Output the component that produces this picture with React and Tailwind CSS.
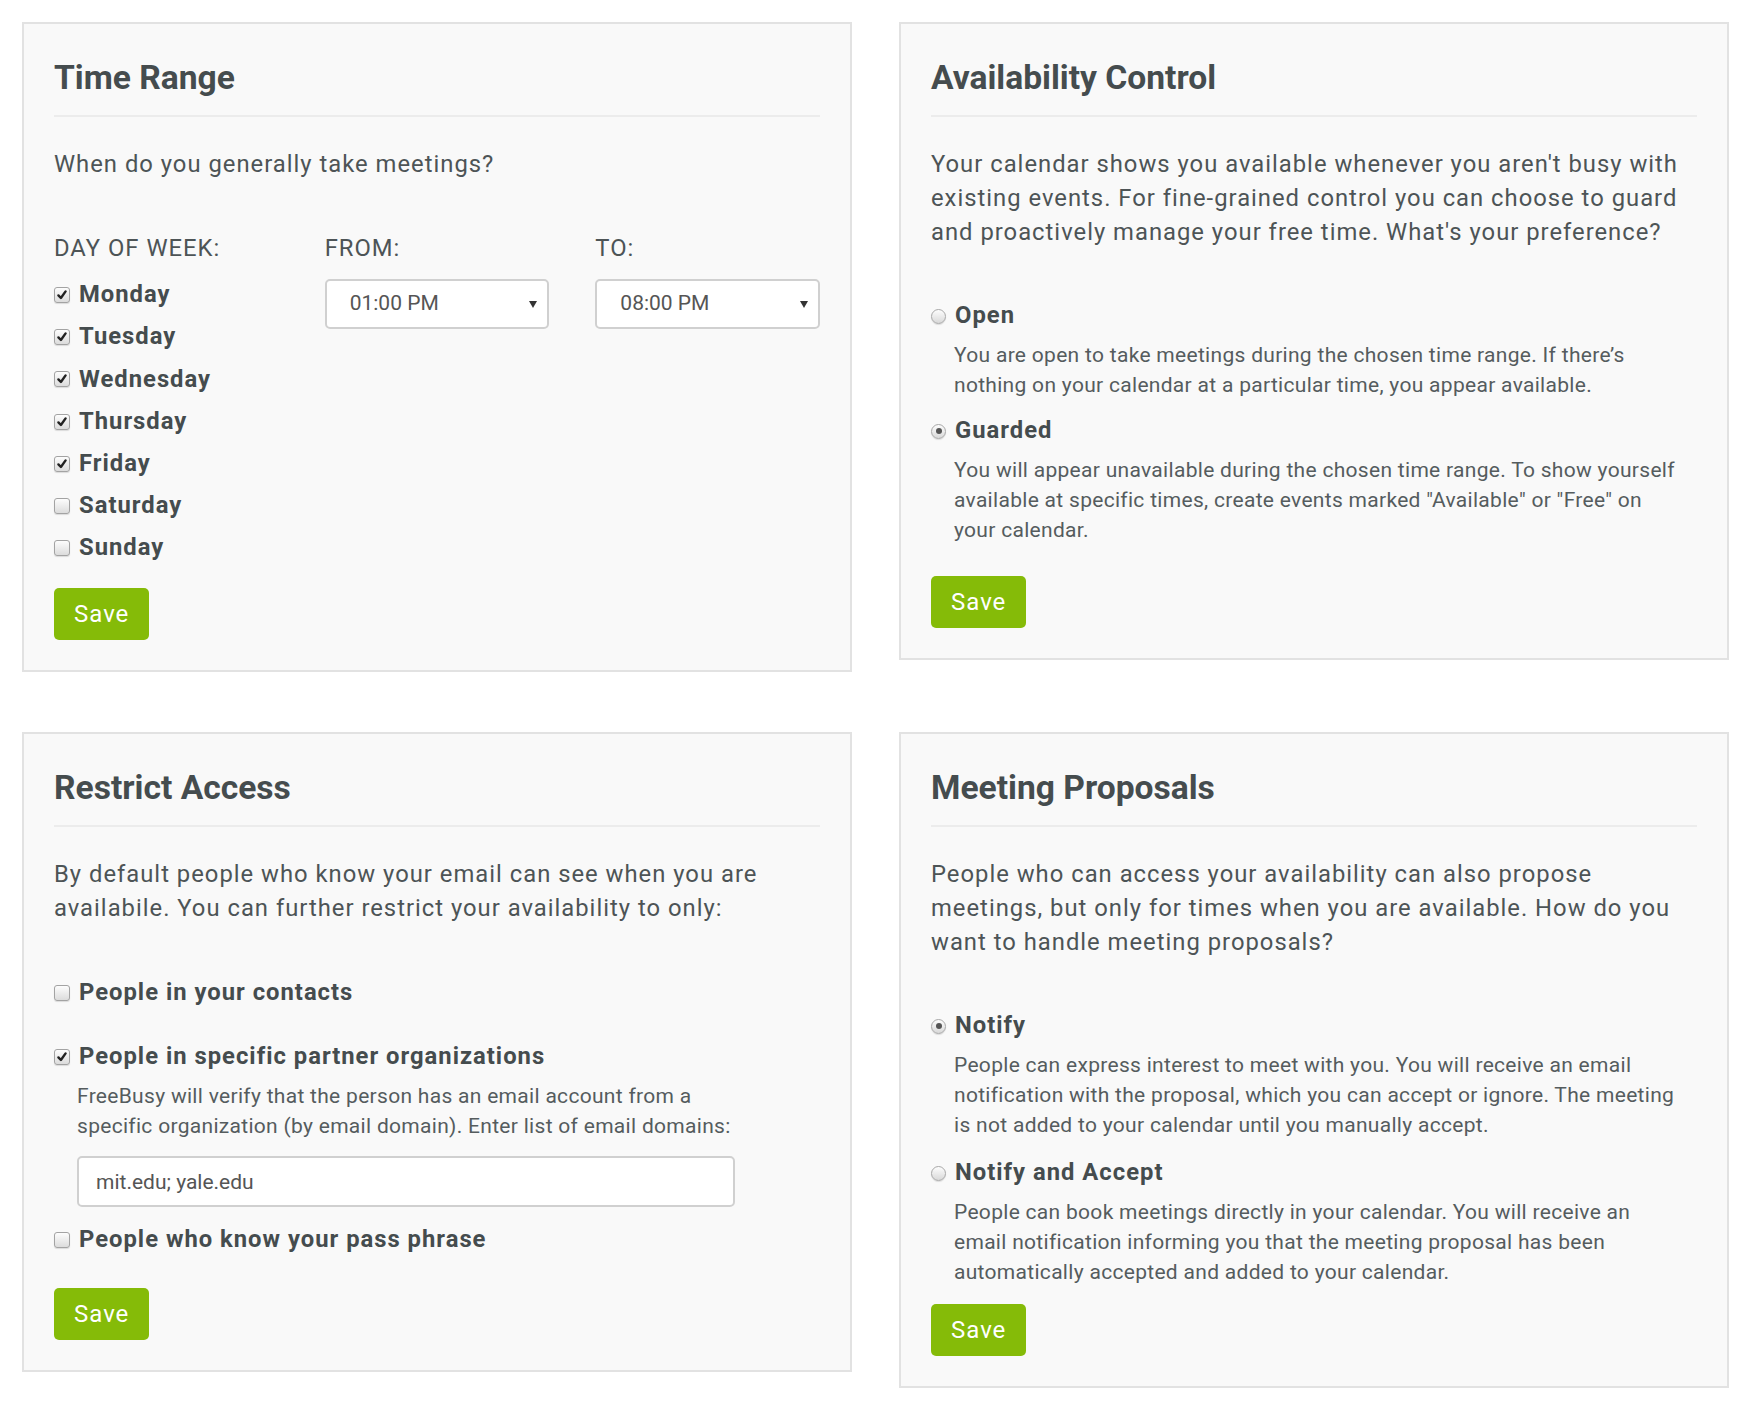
import React from 'react';

const days = [
  { name: 'Monday', checked: true },
  { name: 'Tuesday', checked: true },
  { name: 'Wednesday', checked: true },
  { name: 'Thursday', checked: true },
  { name: 'Friday', checked: true },
  { name: 'Saturday', checked: false },
  { name: 'Sunday', checked: false },
];

const Checkbox = ({ checked }) => (
  <span className="inline-flex h-[16px] w-[16px] shrink-0 items-center justify-center rounded-[3px] border border-[#a3a3a3] bg-linear-to-b from-[#fdfdfd] to-[#dcdcdc] shadow-[0_1px_1px_rgba(0,0,0,0.12)]">
    {checked && (
      <svg viewBox="0 0 12 12" className="h-[12px] w-[12px]">
        <path d="M2.4 6.4 L4.9 9 L9.6 2.4" fill="none" stroke="#222" strokeWidth="2.4" strokeLinecap="round" strokeLinejoin="round" />
      </svg>
    )}
  </span>
);

const Radio = ({ checked }) => (
  <span className="inline-flex h-[15px] w-[15px] shrink-0 items-center justify-center rounded-full border border-[#a8a8a8] bg-linear-to-b from-[#fdfdfd] to-[#d9d9d9] shadow-[0_1px_1px_rgba(0,0,0,0.12)]">
    {checked && <span className="h-[6px] w-[6px] rounded-full bg-[#555]" />}
  </span>
);

const SaveButton = ({ className = '' }) => (
  <button className={`h-[52px] rounded-[5px] bg-[#85bb08] px-[20px] text-[24px] tracking-[1px] text-white ${className}`}>
    Save
  </button>
);

const Card = ({ title, children }) => (
  <div className="border-2 border-[#e2e2e2] bg-[#f9f9f9] px-[30px] pt-[35px] pb-[30px]">
    <h3 className="text-[33.6px] font-bold leading-[37px] text-[#454c4e]">{title}</h3>
    <div className="mt-[19px] border-t-2 border-[#ececec]" />
    {children}
  </div>
);

const Select = ({ value }) => (
  <div className="flex h-[50px] w-full items-center justify-between rounded-[5px] border-2 border-[#d0d0d0] bg-white pl-[23px] pr-[10px] text-[21px] text-[#555]">
    <span>{value}</span>
    <svg viewBox="0 0 8 7" className="h-[7px] w-[8px]">
      <path d="M0 0 H8 L4 7 Z" fill="#333" />
    </svg>
  </div>
);

const OptionLabel = ({ control, children, className = '' }) => (
  <label className={`flex h-[34px] items-center gap-[9px] text-[23.8px] font-bold tracking-[1px] text-[#454c4e] ${className}`}>
    {control}
    <span>{children}</span>
  </label>
);

const Desc = ({ children, className = '' }) => (
  <p className={`mt-[7px] pl-[23px] text-[21px] leading-[30px] tracking-[0.3px] text-[#555c5e] ${className}`}>{children}</p>
);

const Lead = ({ children, className = '' }) => (
  <p className={`text-[23.8px] leading-[34px] tracking-[1px] text-[#4d5456] ${className}`}>{children}</p>
);

const TimeRange = () => (
  <Card title="Time Range">
    <Lead className="mt-[30px]">When do you generally take meetings?</Lead>
    <div className="mt-[50px] grid grid-cols-3 gap-x-[46px]">
      <div>
        <Lead className="uppercase">Day of week:</Lead>
        <div className="mt-[9px]">
          {days.map((d) => (
            <label key={d.name} className="flex h-[42.2px] items-center gap-[9px] text-[23.8px] font-bold tracking-[1px] text-[#454c4e]">
              <Checkbox checked={d.checked} />
              <span>{d.name}</span>
            </label>
          ))}
        </div>
      </div>
      <div>
        <Lead className="uppercase">From:</Lead>
        <div className="mt-[14px]">
          <Select value="01:00 PM" />
        </div>
      </div>
      <div>
        <Lead className="uppercase">To:</Lead>
        <div className="mt-[14px]">
          <Select value="08:00 PM" />
        </div>
      </div>
    </div>
    <SaveButton className="mt-[19px]" />
  </Card>
);

const AvailabilityControl = () => (
  <Card title="Availability Control">
    <Lead className="mt-[30px]">
      Your calendar shows you available whenever you aren't busy with existing events. For fine-grained control you can choose to guard and proactively manage your free time. What's your preference?
    </Lead>
    <div className="mt-[50px] pr-[16px]">
      <OptionLabel control={<Radio checked={false} />}>Open</OptionLabel>
      <Desc>
        You are open to take meetings during the chosen time range. If there’s nothing on your calendar at a particular time, you appear available.
      </Desc>
      <OptionLabel className="mt-[14px]" control={<Radio checked />}>Guarded</OptionLabel>
      <Desc>
        You will appear unavailable during the chosen time range. To show yourself available at specific times, create events marked "Available" or "Free" on your calendar.
      </Desc>
    </div>
    <SaveButton className="mt-[31px]" />
  </Card>
);

const RestrictAccess = () => (
  <Card title="Restrict Access">
    <Lead className="mt-[30px]">
      By default people who know your email can see when you are availabile. You can further restrict your availability to only:
    </Lead>
    <div className="mt-[51px]">
      <OptionLabel control={<Checkbox checked={false} />}>People in your contacts</OptionLabel>
      <OptionLabel className="mt-[30px]" control={<Checkbox checked />}>People in specific partner organizations</OptionLabel>
      <div className="w-[681px]">
        <Desc>
          FreeBusy will verify that the person has an email account from a specific organization (by email domain). Enter list of email domains:
        </Desc>
        <div className="mt-[15px] pl-[23px]">
          <input
            type="text"
            defaultValue="mit.edu; yale.edu"
            className="h-[51px] w-full rounded-[5px] border-2 border-[#d0d0d0] bg-white pl-[17px] text-[21px] text-[#555] outline-none"
          />
        </div>
      </div>
      <OptionLabel className="mt-[16px]" control={<Checkbox checked={false} />}>People who know your pass phrase</OptionLabel>
    </div>
    <SaveButton className="mt-[31px]" />
  </Card>
);

const MeetingProposals = () => (
  <Card title="Meeting Proposals">
    <Lead className="mt-[30px]">
      People who can access your availability can also propose meetings, but only for times when you are available. How do you want to handle meeting proposals?
    </Lead>
    <div className="mt-[50px] pr-[16px]">
      <OptionLabel control={<Radio checked />}>Notify</OptionLabel>
      <Desc>
        People can express interest to meet with you. You will receive an email notification with the proposal, which you can accept or ignore. The meeting is not added to your calendar until you manually accept.
      </Desc>
      <OptionLabel className="mt-[16px]" control={<Radio checked={false} />}>Notify and Accept</OptionLabel>
      <Desc>
        People can book meetings directly in your calendar. You will receive an email notification informing you that the meeting proposal has been automatically accepted and added to your calendar.
      </Desc>
    </div>
    <SaveButton className="mt-[17px]" />
  </Card>
);

export default function App() {
  return (
    <div className="min-h-screen bg-white pl-[22px] pt-[22px] font-['Roboto','Liberation_Sans',sans-serif]">
      <div className="grid grid-cols-[830px_830px] items-start gap-x-[47px] gap-y-[60px]">
        <TimeRange />
        <AvailabilityControl />
        <RestrictAccess />
        <MeetingProposals />
      </div>
    </div>
  );
}
